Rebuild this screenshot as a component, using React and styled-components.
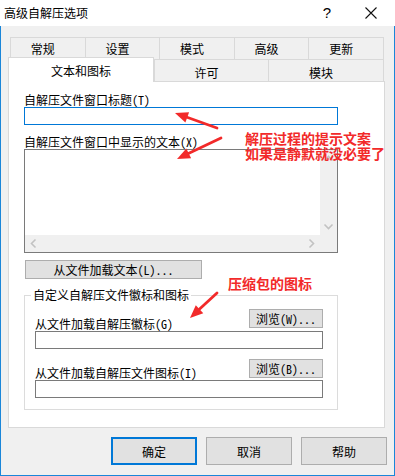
import React from "react";
import styled, { createGlobalStyle } from "styled-components";

const UI = `"Noto Sans CJK SC", "Noto Sans", sans-serif`;
const SONG = `"Noto Sans Mono CJK SC", "Noto Sans CJK SC", sans-serif`;
const RED = "#f22a2a";

const GlobalStyle = createGlobalStyle`
  html, body {
    margin: 0;
    padding: 0;
    background: #fff;
  }
  body {
    font-family: ${UI};
    font-size: 12px;
    color: #000;
  }
`;

const Arrow = ({ x1, y1, x2, y2 }) => {
  const dx = x2 - x1;
  const dy = y2 - y1;
  const len = Math.hypot(dx, dy);
  const ux = dx / len;
  const uy = dy / len;
  const hl = 13;
  const hw = 5.5;
  const bx = x2 - ux * hl;
  const by = y2 - uy * hl;
  const pts = [
    [x2, y2],
    [bx - uy * hw, by + ux * hw],
    [bx + uy * hw, by - ux * hw],
  ]
    .map((p) => p.join(","))
    .join(" ");
  return (
    <g>
      <line x1={x1} y1={y1} x2={bx + ux} y2={by + uy} stroke={RED} strokeWidth="2.8" strokeLinecap="round" />
      <polygon points={pts} fill={RED} />
    </g>
  );
};

const Chevron = ({ dir }) => {
  const d = {
    up: "M1.5 5.5 L5.5 1.5 L9.5 5.5",
    down: "M1.5 1.5 L5.5 5.5 L9.5 1.5",
    left: "M5.5 1.5 L1.5 5.5 L5.5 9.5",
    right: "M1.5 1.5 L5.5 5.5 L1.5 9.5",
  }[dir];
  const vertical = dir === "up" || dir === "down";
  return (
    <svg width={vertical ? 11 : 7} height={vertical ? 7 : 11} viewBox={vertical ? "0 0 11 7" : "0 0 7 11"}>
      <path d={d} fill="none" stroke="#c2c2c2" strokeWidth="1.6" />
    </svg>
  );
};

const firstRow = ["常规", "设置", "模式", "高级", "更新"];

const App = () => {
  return (
    <>
      <GlobalStyle />
      <Window>
        <TitleBar>
          <Title>高级自解压选项</Title>
          <HelpMark>?</HelpMark>
          <CloseBox>
            <svg width="12" height="12" viewBox="0 0 12 12">
              <path d="M0.5 0.5 L11.5 11.5 M11.5 0.5 L0.5 11.5" stroke="#111" strokeWidth="1.1" />
            </svg>
          </CloseBox>
        </TitleBar>

        <Body>
          <TabRow $back>
            {firstRow.map((t) => (
              <Tab key={t}>{t}</Tab>
            ))}
          </TabRow>
          <TabRow>
            <ActiveTab>文本和图标</ActiveTab>
            <Tab $width={115} $low>许可</Tab>
            <Tab $width={115} $low>模块</Tab>
          </TabRow>

          <Panel>
            <Label>自解压文件窗口标题(T)</Label>
            <Field $focused readOnly />
            <Label $top={10}>自解压文件窗口中显示的文本(X)</Label>
            <TextBox>
              <TextArea />
              <VScroll>
                <ScrollArrow><Chevron dir="up" /></ScrollArrow>
                <ScrollArrow><Chevron dir="down" /></ScrollArrow>
              </VScroll>
              <HScroll>
                <ScrollArrow><Chevron dir="left" /></ScrollArrow>
                <ScrollArrow><Chevron dir="right" /></ScrollArrow>
              </HScroll>
              <Corner />
            </TextBox>
            <LoadButton>从文件加载文本(L)...</LoadButton>

            <Group>
              <Legend>自定义自解压文件徽标和图标</Legend>
              <GroupRow>
                <Label>从文件加载自解压徽标(G)</Label>
                <BrowseButton $bottom={3}>浏览(W)...</BrowseButton>
              </GroupRow>
              <Field $width={288} readOnly />
              <GroupRow $top={10}>
                <Label>从文件加载自解压文件图标(I)</Label>
                <BrowseButton $bottom={2}>浏览(B)...</BrowseButton>
              </GroupRow>
              <Field $width={288} readOnly />
            </Group>
          </Panel>

          <Footer>
            <DialogButton $default>确定</DialogButton>
            <DialogButton>取消</DialogButton>
            <DialogButton>帮助</DialogButton>
          </Footer>
        </Body>

        <Overlay>
          <svg width="395" height="476">
            <Arrow x1={217} y1={128} x2={175} y2={113} />
            <Arrow x1={221} y1={138} x2={177} y2={159} />
            <Arrow x1={217} y1={293} x2={190} y2={318} />
          </svg>
          <Note $x={245} $y={131}>
            解压过程的提示文案
            <br />
            如果是静默就没必要了
          </Note>
          <Note $x={228} $y={276}>压缩包的图标</Note>
        </Overlay>
      </Window>
    </>
  );
};

export default App;

const Window = styled.div`
  position: relative;
  width: 395px;
  height: 476px;
  display: flex;
  flex-direction: column;
  box-sizing: border-box;
`;

const TitleBar = styled.div`
  height: 26px;
  flex: none;
  display: flex;
  align-items: center;
  background: #fff;
`;

const Title = styled.div`
  flex: 1;
  padding-left: 4px;
  font-family: ${UI};
  font-size: 12px;
  line-height: 26px;
`;

const HelpMark = styled.div`
  width: 30px;
  text-align: center;
  font-family: "Liberation Sans", sans-serif;
  font-size: 15px;
  line-height: 26px;
  margin-right: 6px;
`;

const CloseBox = styled.div`
  width: 46px;
  height: 26px;
  margin-right: 1px;
  display: flex;
  align-items: center;
  justify-content: center;
`;

const Body = styled.div`
  flex: 1;
  display: flex;
  flex-direction: column;
  background: #f0f0f0;
  border: 1px solid #1a86d9;
  border-top: none;
  padding: 11px 9px 10px 7px;
  min-height: 0;
`;

const TabRow = styled.div`
  display: flex;
  height: 22px;
  flex: none;
  margin: ${(p) => (p.$back ? "0 1px 0 2px" : "0 1px 0 0")};
`;

const Tab = styled.div`
  flex: ${(p) => (p.$width ? "none" : "1")};
  width: ${(p) => (p.$width ? `${p.$width}px` : "auto")};
  box-sizing: border-box;
  border: 1px solid #d9d9d9;
  border-bottom: none;
  display: flex;
  align-items: center;
  justify-content: center;
  padding: ${(p) => (p.$low ? "3px 10px 0 0" : "0 10px 0 0")};
  font-family: ${UI};
  font-size: 12px;
  background: #f0f0f0;

  & + & {
    border-left: none;
  }
`;

const ActiveTab = styled.div`
  position: relative;
  z-index: 1;
  width: 146px;
  height: 25px;
  margin: -2px 0 -1px 0;
  box-sizing: border-box;
  border: 1px solid #d9d9d9;
  border-bottom: none;
  background: #fff;
  display: flex;
  align-items: center;
  justify-content: center;
  font-family: ${UI};
  font-size: 12px;
`;

const Panel = styled.div`
  flex: 1;
  display: flex;
  flex-direction: column;
  align-items: flex-start;
  background: #fff;
  border: 1px solid #d9d9d9;
  padding: 11px 0 0 15px;
`;

const Label = styled.div`
  font-family: ${SONG};
  font-size: 12px;
  line-height: 14px;
  height: 14px;
  white-space: nowrap;
  margin-top: ${(p) => p.$top || 0}px;
`;

const Field = styled.input`
  display: block;
  width: ${(p) => p.$width || 314}px;
  height: 18px;
  box-sizing: border-box;
  margin: 0;
  padding: 0;
  border: 1px solid ${(p) => (p.$focused ? "#0078d7" : "#7a7a7a")};
  background: #fff;
  outline: none;
`;

const TextBox = styled.div`
  width: 314px;
  height: 104px;
  box-sizing: border-box;
  border: 1px solid #7a7a7a;
  display: grid;
  grid-template-columns: 1fr 17px;
  grid-template-rows: 1fr 17px;
  background: #fff;
`;

const TextArea = styled.div`
  background: #fff;
`;

const VScroll = styled.div`
  background: #f0f0f0;
  display: flex;
  flex-direction: column;
  justify-content: space-between;
`;

const HScroll = styled.div`
  background: #f0f0f0;
  display: flex;
  justify-content: space-between;
`;

const Corner = styled.div`
  background: #f0f0f0;
`;

const ScrollArrow = styled.div`
  width: 17px;
  height: 17px;
  display: flex;
  align-items: center;
  justify-content: center;
`;

const LoadButton = styled.div`
  margin: 7px 0 0 1px;
  width: 177px;
  height: 19px;
  box-sizing: border-box;
  border: 1px solid #adadad;
  background: #e1e1e1;
  font-family: ${SONG};
  font-size: 12px;
  line-height: 17px;
  text-align: center;
  white-space: nowrap;
`;

const Group = styled.fieldset`
  margin: 9px 0 0 0;
  width: 314px;
  min-width: 0;
  box-sizing: border-box;
  border: 1px solid #dcdcdc;
  padding: 7px 14px 11px 10px;
`;

const Legend = styled.legend`
  padding: 0 2px;
  margin-left: -4px;
  font-family: ${SONG};
  font-size: 12px;
  line-height: 14px;
`;

const GroupRow = styled.div`
  display: flex;
  justify-content: space-between;
  align-items: flex-end;
  margin-top: ${(p) => p.$top || 0}px;
`;

const BrowseButton = styled.div`
  width: 74px;
  height: 19px;
  margin-bottom: ${(p) => p.$bottom}px;
  box-sizing: border-box;
  border: 1px solid #adadad;
  background: #e1e1e1;
  font-family: ${SONG};
  font-size: 12px;
  line-height: 17px;
  text-align: center;
  white-space: nowrap;
`;

const Footer = styled.div`
  display: flex;
  justify-content: flex-end;
  gap: 9px;
  margin: 9px -2px 0 0;
  flex: none;
`;

const DialogButton = styled.div`
  width: 86px;
  height: 28px;
  box-sizing: border-box;
  border: ${(p) => (p.$default ? "2px solid #0078d7" : "1px solid #adadad")};
  background: #e1e1e1;
  display: flex;
  align-items: center;
  justify-content: center;
  font-family: ${UI};
  font-size: 12px;
`;

const Overlay = styled.div`
  position: absolute;
  inset: 0;
  pointer-events: none;

  & > svg {
    position: absolute;
    left: 0;
    top: 0;
  }
`;

const Note = styled.div`
  position: absolute;
  left: ${(p) => p.$x}px;
  top: ${(p) => p.$y}px;
  color: ${RED};
  font-family: ${UI};
  font-size: 14px;
  font-weight: 700;
  line-height: 15px;
  white-space: nowrap;
`;
